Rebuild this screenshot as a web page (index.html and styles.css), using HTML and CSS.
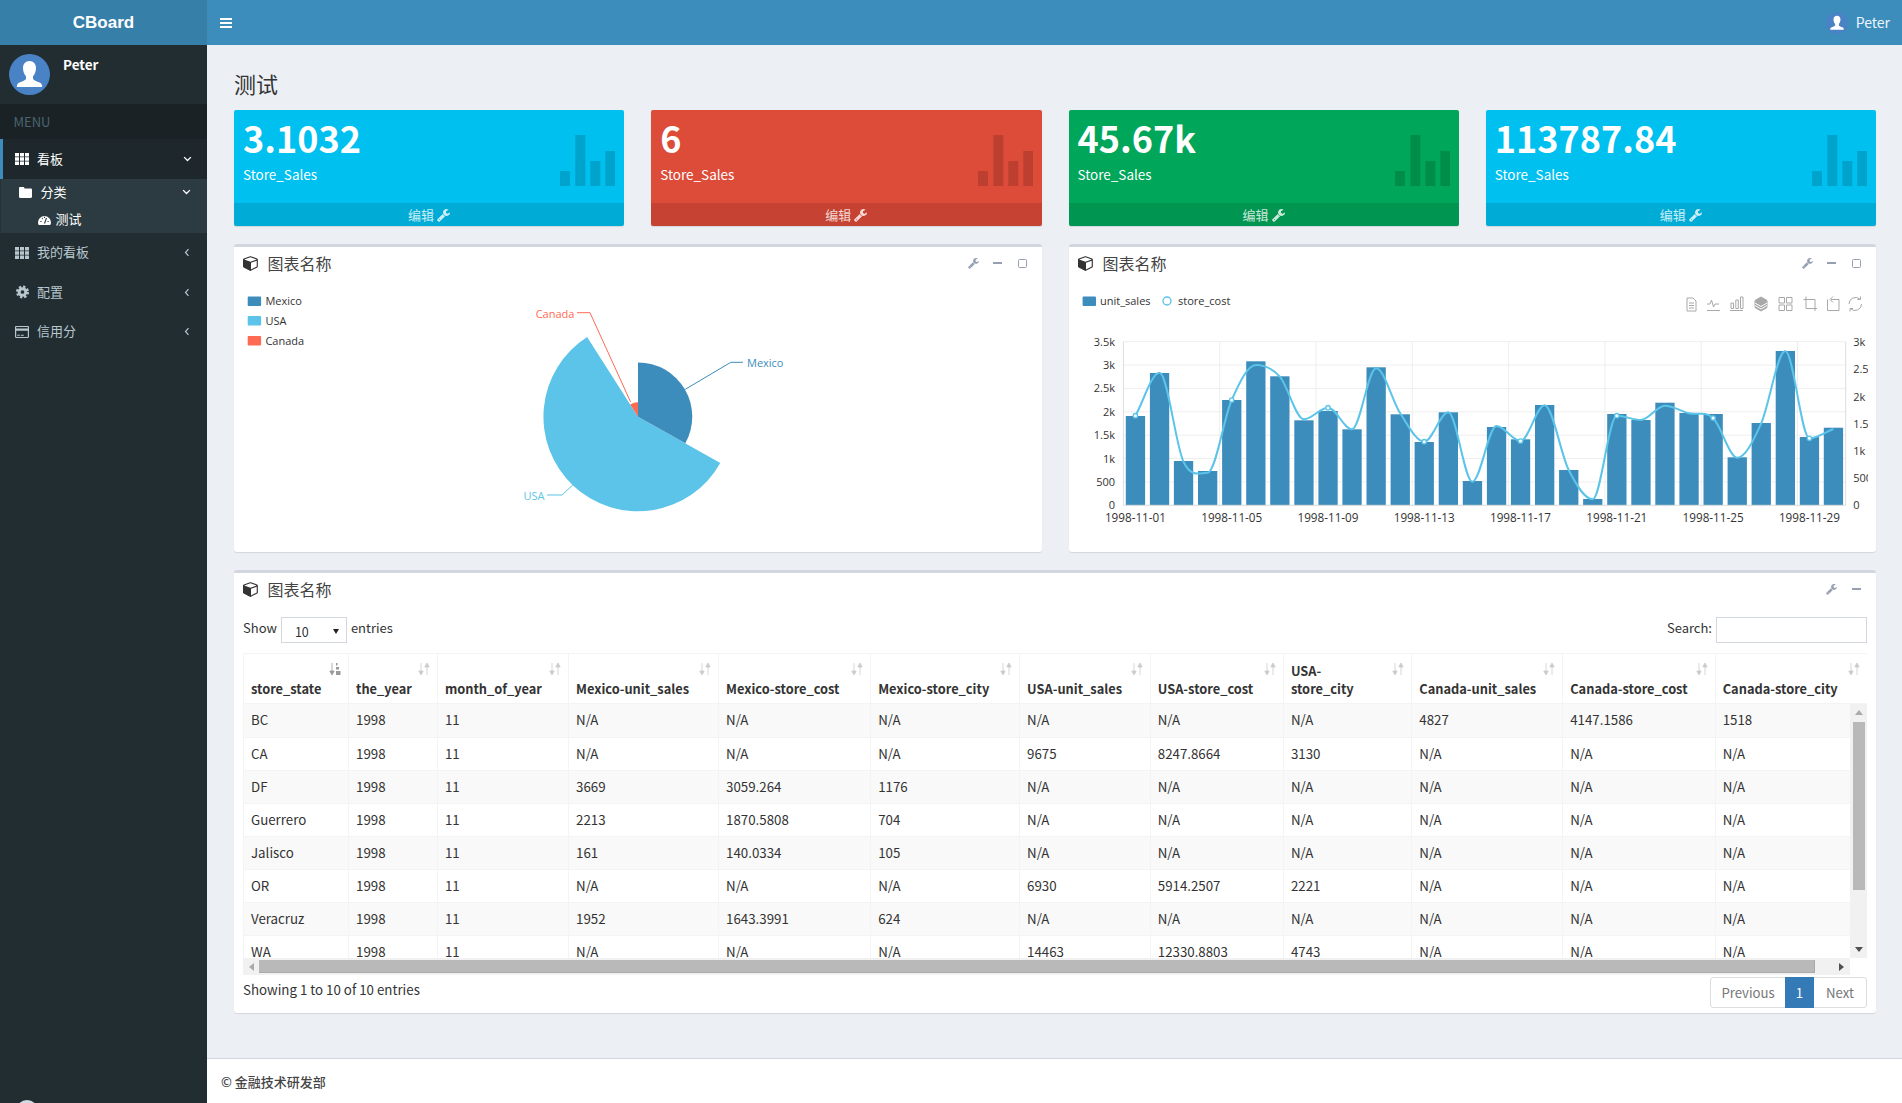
FILE: index.html
```html
<!DOCTYPE html>
<html lang="zh">
<head>
<meta charset="utf-8">
<title>CBoard</title>
<link rel="stylesheet" href="styles.css">
</head>
<body>
<svg class="defs" aria-hidden="true">
  <symbol id="i-wrench" viewBox="0 0 1664 1792"><path d="M384 1472q0-26-19-45t-45-19-45 19-19 45 19 45 45 19 45-19 19-45zm644-420l-682 682q-37 37-90 37-52 0-91-37l-106-108q-38-36-38-90 0-53 38-91l681-681q39 98 114.5 173.5t173.5 114.5zm634-435q0 39-23 106-47 134-164.5 217.5t-258.5 83.5q-185 0-316.5-131.5t-131.5-316.5 131.5-316.5 316.5-131.5q58 0 121.5 16.5t107.5 46.5q16 11 16 28t-16 28l-293 169v224l193 107q5-3 79-48.5t135.5-81 70.5-35.5q15 0 23.5 10t8.5 25z"/></symbol>
  <symbol id="i-cube" viewBox="0 0 1792 1792"><path d="M896 1629l640-349v-636l-640 233v752zm-64-865l698-254-698-254-698 254zm832-252v768q0 35-18 65t-49 47l-704 384q-28 16-61 16t-61-16l-704-384q-31-17-49-47t-18-65v-768q0-40 23-73t61-47l704-256q22-8 44-8t44 8l704 256q38 14 61 47t23 73z"/></symbol>
  <symbol id="i-th" viewBox="0 0 14 12"><path d="M0 0h4v3.4H0zM5 0h4v3.4H5zM10 0h4v3.4h-4zM0 4.3h4v3.4H0zM5 4.3h4v3.4H5zM10 4.3h4v3.4h-4zM0 8.6h4V12H0zM5 8.6h4V12H5zM10 8.6h4V12h-4z"/></symbol>
  <symbol id="i-left" viewBox="0 0 8 12"><path d="M6 1.5 2 6l4 4.5" fill="none" stroke="currentColor" stroke-width="1.6"/></symbol>
  <symbol id="i-down" viewBox="0 0 12 8"><path d="M1.5 1.5 6 6l4.500-4.500" fill="none" stroke="currentColor" stroke-width="1.8"/></symbol>
  <symbol id="i-sort" viewBox="0 0 12 14"><path d="M3 1v10M.8 9 3 13l2.200-4zM9 13V3M6.800 5 9 1l2.200 4z" fill="currentColor" stroke="currentColor" stroke-width=".8"/></symbol>
  <symbol id="i-user" viewBox="0 0 41 41"><circle cx="20.500" cy="20.500" r="20.500" class="avatar-bg"/><path d="M20.500 7c-4 0-6.500 3-6.500 7 0 3.500 1.300 6.500 3 8.300v2.700c-1 1.500-4 2.500-6.500 3.500-2.300.9-2.700 2.700-2.700 4.500h25.400c0-1.800-.4-3.600-2.700-4.500-2.500-1-5.500-2-6.500-3.500v-2.700c1.700-1.800 3-4.800 3-8.300 0-4-2.500-7-6.500-7z" class="avatar-fg"/></symbol>
</svg>

<div class="app">
  <aside class="sidebar">
    <div class="logo">CBoard</div>
    <div class="user-panel">
      <svg class="avatar"><use href="#i-user"/></svg>
      <span class="user-name">Peter</span>
    </div>
    <div class="menu-head">MENU</div>
    <a class="item active"><svg class="ico ico-th"><use href="#i-th"/></svg><span>看板</span><svg class="chev-d"><use href="#i-down"/></svg></a>
    <div class="subtree">
      <a class="sub sub-1">
        <svg class="ico-folder" viewBox="0 0 13 11"><path d="M0 1.200C0 .5.500 0 1.200 0h3c.7 0 1 .4 1.200 1l.2.500h6.200c.7 0 1.200.5 1.200 1.200v7.100c0 .7-.5 1.200-1.200 1.200H1.200C.5 11 0 10.500 0 9.800z"/></svg>
        <span>分类</span><svg class="chev-d chev-sub"><use href="#i-down"/></svg>
      </a>
      <a class="sub sub-2">
        <svg class="ico-gauge" viewBox="0 0 13 11"><path class="gauge-f" d="M0 8.500a6.500 6.500 0 0 1 13 0c0 1-.3 1.800-.7 2.500H.7C.3 10.300 0 9.500 0 8.500z"/><path class="gauge-m" d="M6.500 9.500 8.500 4M2.300 7.500h1.200M9.500 7.500h1.200M4 4.200l.7.800M6.500 2.800v1.200"/></svg>
        <span>测试</span>
      </a>
    </div>
    <a class="item"><svg class="ico ico-th"><use href="#i-th"/></svg><span>我的看板</span><svg class="chev-l"><use href="#i-left"/></svg></a>
    <a class="item">
      <svg class="ico ico-gear" viewBox="0 0 14 14"><circle cx="7" cy="7" r="3.600" class="gear-in"/><circle cx="7" cy="7" r="5.800" class="gear-out"/></svg>
      <span>配置</span><svg class="chev-l"><use href="#i-left"/></svg>
    </a>
    <a class="item">
      <svg class="ico ico-card" viewBox="0 0 14 12"><path d="M1.200 0h11.600C13.500 0 14 .5 14 1.200v9.600c0 .7-.5 1.200-1.200 1.200H1.200C.5 12 0 11.500 0 10.800V1.200C0 .5.500 0 1.200 0zM1.200 1.100v1.300h11.600V1.100zM1.200 4.700v6.200h11.600V4.700zM2.200 8.800h2.600v1H2.200zM5.800 8.800h3v1h-3z" fill-rule="evenodd"/></svg>
      <span>信用分</span><svg class="chev-l"><use href="#i-left"/></svg>
    </a>
    <div class="peek"></div>
  </aside>

  <div class="main">
    <header class="topbar">
      <svg class="burger" viewBox="0 0 12 10"><path d="M0 0h12v2H0zM0 4h12v2H0zM0 8h12v2H0z"/></svg>
      <div class="top-user">
        <svg class="top-avatar"><use href="#i-user"/></svg>
        <span>Peter</span>
      </div>
    </header>

    <main class="content">
      <h1 class="page-title">测试</h1>

      <section class="stats">
        <div class="stat stat-info">
          <div class="stat-inner"><h3>3.1032</h3><p>Store_Sales</p></div>
          <svg class="stat-bars" viewBox="0 0 55 51"><path d="M0 36h10v15H0zM15.300 0h10v51h-10zM30.300 26h10v25h-10zM45.300 16h10v35h-10z"/></svg>
          <a class="stat-foot">编辑 <svg class="foot-wrench"><use href="#i-wrench"/></svg></a>
        </div>
        <div class="stat stat-danger">
          <div class="stat-inner"><h3>6</h3><p>Store_Sales</p></div>
          <svg class="stat-bars" viewBox="0 0 55 51"><path d="M0 36h10v15H0zM15.300 0h10v51h-10zM30.300 26h10v25h-10zM45.300 16h10v35h-10z"/></svg>
          <a class="stat-foot">编辑 <svg class="foot-wrench"><use href="#i-wrench"/></svg></a>
        </div>
        <div class="stat stat-success">
          <div class="stat-inner"><h3>45.67k</h3><p>Store_Sales</p></div>
          <svg class="stat-bars" viewBox="0 0 55 51"><path d="M0 36h10v15H0zM15.300 0h10v51h-10zM30.300 26h10v25h-10zM45.300 16h10v35h-10z"/></svg>
          <a class="stat-foot">编辑 <svg class="foot-wrench"><use href="#i-wrench"/></svg></a>
        </div>
        <div class="stat stat-info">
          <div class="stat-inner"><h3>113787.84</h3><p>Store_Sales</p></div>
          <svg class="stat-bars" viewBox="0 0 55 51"><path d="M0 36h10v15H0zM15.300 0h10v51h-10zM30.300 26h10v25h-10zM45.300 16h10v35h-10z"/></svg>
          <a class="stat-foot">编辑 <svg class="foot-wrench"><use href="#i-wrench"/></svg></a>
        </div>
      </section>

      <section class="charts">
        <article class="box">
          <div class="box-head">
            <svg class="cube"><use href="#i-cube"/></svg><span class="box-title">图表名称</span>
            <div class="tools">
              <span class="tool"><svg class="t-wrench"><use href="#i-wrench"/></svg></span>
              <span class="tool"><i class="t-minus"></i></span>
              <span class="tool"><i class="t-square"></i></span>
            </div>
          </div>
          <svg class="chart chart-pie" viewBox="0 0 808 268">
            <rect class="s-blue" x="13.700" y="12.500" width="13.400" height="9.500" rx="1"/>
            <rect class="s-cyan" x="13.700" y="32" width="13.400" height="9.500" rx="1"/>
            <rect class="s-red" x="13.700" y="52" width="13.400" height="9.500" rx="1"/>
            <text class="lg" x="31.400" y="21">Mexico</text>
            <text class="lg" x="31.400" y="41">USA</text>
            <text class="lg" x="31.400" y="61">Canada</text>
            <path class="s-cyan" d="M404 132.700L486.300 179.100A94.500 94.500 0 1 1 353.100 53.100Z"/>
            <path class="s-blue" d="M404 132.700L404 78.400A54.300 54.300 0 0 1 451.300 159.300Z"/>
            <path class="s-red" d="M404 132.700L396.200 120.600A14.400 14.400 0 0 1 404 118.300Z"/>
            <path class="l-blue" d="M451.300 105.300L496.800 78.300H509"/>
            <path class="l-red" d="M396.600 118L356 28.700H343"/>
            <path class="l-cyan" d="M338.800 201L328 211H313"/>
            <text class="t-blue" x="513" y="83">Mexico</text>
            <text class="t-red" x="340.400" y="34" text-anchor="end">Canada</text>
            <text class="t-cyan" x="310.400" y="216" text-anchor="end">USA</text>
          </svg>
        </article>

        <article class="box">
          <div class="box-head">
            <svg class="cube"><use href="#i-cube"/></svg><span class="box-title">图表名称</span>
            <div class="tools">
              <span class="tool"><svg class="t-wrench"><use href="#i-wrench"/></svg></span>
              <span class="tool"><i class="t-minus"></i></span>
              <span class="tool"><i class="t-square"></i></span>
            </div>
          </div>
          <svg class="chart chart-line" viewBox="0 0 799 268">
            <path class="grid" d="M54.400 57.700H776.700M54.400 81.100H776.700M54.400 104.400H776.700M54.400 127.800H776.700M54.400 151.200H776.700M54.400 174.500H776.700M54.400 197.900H776.700M150.700 57.700V221.300M247 57.700V221.300M343.300 57.700V221.300M439.600 57.700V221.300M535.900 57.700V221.300M632.200 57.700V221.300M728.500 57.700V221.300"/>
            <g class="s-blue">
              <rect x="56.800" y="132" width="19.300" height="89.300"/><rect x="80.900" y="89" width="19.300" height="132.300"/><rect x="104.900" y="177" width="19.300" height="44.300"/><rect x="129" y="187" width="19.300" height="34.300"/><rect x="153.100" y="116" width="19.300" height="105.300"/><rect x="177.200" y="77.300" width="19.300" height="144"/><rect x="201.200" y="92.300" width="19.300" height="129"/><rect x="225.300" y="136.300" width="19.300" height="85"/><rect x="249.400" y="127" width="19.300" height="94.300"/><rect x="273.400" y="145.300" width="19.300" height="76"/><rect x="297.500" y="83.300" width="19.300" height="138"/><rect x="321.600" y="130.300" width="19.300" height="91"/><rect x="345.600" y="158" width="19.300" height="63.300"/><rect x="369.700" y="128.300" width="19.300" height="93"/><rect x="393.800" y="197" width="19.300" height="24.300"/><rect x="417.900" y="143" width="19.300" height="78.300"/><rect x="441.900" y="155.300" width="19.300" height="66"/><rect x="466" y="121" width="19.300" height="100.300"/><rect x="490.100" y="186" width="19.300" height="35.300"/><rect x="514.100" y="215" width="19.300" height="6.300"/><rect x="538.200" y="130" width="19.300" height="91.300"/><rect x="562.300" y="136" width="19.300" height="85.300"/><rect x="586.300" y="118.700" width="19.300" height="102.600"/><rect x="610.400" y="129" width="19.300" height="92.300"/><rect x="634.500" y="130" width="19.300" height="91.300"/><rect x="658.600" y="173.300" width="19.300" height="48"/><rect x="682.600" y="139" width="19.300" height="82.300"/><rect x="706.700" y="67" width="19.300" height="154.300"/><rect x="730.800" y="153" width="19.300" height="68.300"/><rect x="754.800" y="143.700" width="19.300" height="77.600"/>
            </g>
            <path class="axis" d="M54.400 57.700V221.300H776.700V57.700"/>
            <path class="line" d="M66.400 131.700C74.400 118 82.500 88.700 90.500 88.700S106.500 161 114.500 177.700S130.600 188.700 138.600 188.700S154.700 134 162.700 116S178.800 81 186.800 81S202.800 83.700 210.800 92.700S226.900 135.300 234.900 135.300S251 123.700 259 123.700S275 145.300 283 145.300S299.100 84.300 307.100 84.300S323.200 117.100 331.200 129.300S347.200 157.700 355.200 157.700S371.300 128.300 379.300 128.300S395.400 197.700 403.400 197.700S419.500 142 427.500 142S443.500 157 451.500 157S467.600 121.300 475.600 121.300S491.700 170.300 499.700 186S515.700 215.300 523.700 215.300S539.800 131.700 547.800 131.700S563.900 136 571.900 136S587.900 121.700 595.900 121.700S612 127.300 620 129.300S636.100 126.600 644.100 134S660.200 173.700 668.200 173.700S684.200 157.100 692.200 139.300S708.300 67 716.300 67S732.400 154.300 740.400 154.300S756.400 148 764.400 145"/>
            <g class="dot">
              <circle cx="66.400" cy="131.700" r="2.200"/><circle cx="162.700" cy="116" r="2.200"/><circle cx="259" cy="123.700" r="2.200"/><circle cx="355.200" cy="157.700" r="2.200"/><circle cx="451.500" cy="157" r="2.200"/><circle cx="547.800" cy="131.700" r="2.200"/><circle cx="644.100" cy="134" r="2.200"/><circle cx="740.400" cy="154.300" r="2.200"/>
            </g>
            <g class="ax-l" text-anchor="end">
              <text x="46" y="61.700">3.5k</text><text x="46" y="85.100">3k</text><text x="46" y="108.400">2.5k</text><text x="46" y="131.800">2k</text><text x="46" y="155.200">1.5k</text><text x="46" y="178.500">1k</text><text x="46" y="201.900">500</text><text x="46" y="225.300">0</text>
            </g>
            <g class="ax-l">
              <text x="784.200" y="61.700">3k</text><text x="784.200" y="89">2.5</text><text x="784.200" y="116.700">2k</text><text x="784.200" y="144">1.5</text><text x="784.200" y="171">1k</text><text x="784.200" y="198.300">500</text><text x="784.200" y="225.300">0</text>
            </g>
            <g class="ax-l ax-x" text-anchor="middle">
              <text x="66.400" y="238.300">1998-11-01</text><text x="162.700" y="238.300">1998-11-05</text><text x="259" y="238.300">1998-11-09</text><text x="355.200" y="238.300">1998-11-13</text><text x="451.500" y="238.300">1998-11-17</text><text x="547.800" y="238.300">1998-11-21</text><text x="644.100" y="238.300">1998-11-25</text><text x="740.400" y="238.300">1998-11-29</text>
            </g>
            <rect class="s-blue" x="13.600" y="12.500" width="13.400" height="9.500" rx="1"/>
            <text class="lg" x="31" y="21">unit_sales</text>
            <circle class="lg-dot" cx="98" cy="17" r="4"/>
            <text class="lg" x="109" y="21">store_cost</text>
            <g class="tb">
              <path d="M618 14h6l3 3v10h-9zM620 19h5M620 21.500h5M620 24h5"/>
              <path d="M638 26.500h13M638 20h3l1.500-4 2 7 1.500-3h4"/>
              <path d="M661 26.500h13M662 19h2.500v5.500H662zM666.800 16h2.500v8.500h-2.500zM671.500 13h2.500v11.500h-2.500z"/>
              <path class="tb-fill" d="M692 13l6 3.500v7L692 27l-6-3.500v-7z"/>
              <path class="tb-stripe" d="M686 19l6 3.500 6-3.500M686 21.500l6 3.500 6-3.500"/>
              <path d="M710 13.500h5.500v5.500H710zM717.500 13.500H723v5.500h-5.500zM710 21h5.500v5.500H710zM717.500 21H723v5.500h-5.500z"/>
              <path d="M737 12.500V24.500H748M734.500 15.500H746V27"/>
              <path d="M758.500 15.500V26.500H770V15.500H762M764 12.500l-3 3 3 3"/>
              <path d="M780 20a6.500 6.500 0 0 1 11-4.700M792.500 20a6.500 6.500 0 0 1-11 4.700M791.500 12.500v3h-3M781 27.500v-3h3"/>
            </g>
          </svg>
        </article>
      </section>

      <article class="box box-table">
        <div class="box-head">
          <svg class="cube"><use href="#i-cube"/></svg><span class="box-title">图表名称</span>
          <div class="tools">
            <span class="tool"><svg class="t-wrench"><use href="#i-wrench"/></svg></span>
            <span class="tool"><i class="t-minus"></i></span>
            <span class="tool tool-empty"></span>
          </div>
        </div>
        <div class="dt">
          <div class="dt-controls">
            <label class="dt-len">Show <span class="fake-select"><span>10</span><i class="caret"></i></span> entries</label>
            <label class="dt-search">Search: <span class="fake-input"></span></label>
          </div>
          <div class="dt-grid">
            <table class="dt-head">
              <colgroup><col class="c1"><col class="c2"><col class="c3"><col class="c4"><col class="c5"><col class="c6"><col class="c7"><col class="c8"><col class="c9"><col class="c10"><col class="c11"><col class="c12"></colgroup>
              <thead><tr>
                <th>store_state<svg class="sort sort-on" viewBox="0 0 12 14"><path d="M3 1v10M.8 9 3 13l2.200-4z" fill="currentColor" stroke="currentColor" stroke-width=".8"/><path d="M7 1h1.500v2.500H7zM7 5h3v2.500H7zM7 9h4.500v4H7z"/></svg></th>
                <th>the_year<svg class="sort"><use href="#i-sort"/></svg></th>
                <th>month_of_year<svg class="sort"><use href="#i-sort"/></svg></th>
                <th>Mexico-unit_sales<svg class="sort"><use href="#i-sort"/></svg></th>
                <th>Mexico-store_cost<svg class="sort"><use href="#i-sort"/></svg></th>
                <th>Mexico-store_city<svg class="sort"><use href="#i-sort"/></svg></th>
                <th>USA-unit_sales<svg class="sort"><use href="#i-sort"/></svg></th>
                <th>USA-store_cost<svg class="sort"><use href="#i-sort"/></svg></th>
                <th>USA-<br>store_city<svg class="sort"><use href="#i-sort"/></svg></th>
                <th>Canada-unit_sales<svg class="sort"><use href="#i-sort"/></svg></th>
                <th>Canada-store_cost<svg class="sort"><use href="#i-sort"/></svg></th>
                <th>Canada-store_city<svg class="sort"><use href="#i-sort"/></svg></th>
              </tr></thead>
            </table>
            <div class="dt-view">
              <table class="dt-body">
                <colgroup><col class="c1"><col class="c2"><col class="c3"><col class="c4"><col class="c5"><col class="c6"><col class="c7"><col class="c8"><col class="c9"><col class="c10"><col class="c11"><col class="c12b"></colgroup>
                <tbody>
                  <tr><td>BC</td><td>1998</td><td>11</td><td>N/A</td><td>N/A</td><td>N/A</td><td>N/A</td><td>N/A</td><td>N/A</td><td>4827</td><td>4147.1586</td><td>1518</td></tr>
                  <tr><td>CA</td><td>1998</td><td>11</td><td>N/A</td><td>N/A</td><td>N/A</td><td>9675</td><td>8247.8664</td><td>3130</td><td>N/A</td><td>N/A</td><td>N/A</td></tr>
                  <tr><td>DF</td><td>1998</td><td>11</td><td>3669</td><td>3059.264</td><td>1176</td><td>N/A</td><td>N/A</td><td>N/A</td><td>N/A</td><td>N/A</td><td>N/A</td></tr>
                  <tr><td>Guerrero</td><td>1998</td><td>11</td><td>2213</td><td>1870.5808</td><td>704</td><td>N/A</td><td>N/A</td><td>N/A</td><td>N/A</td><td>N/A</td><td>N/A</td></tr>
                  <tr><td>Jalisco</td><td>1998</td><td>11</td><td>161</td><td>140.0334</td><td>105</td><td>N/A</td><td>N/A</td><td>N/A</td><td>N/A</td><td>N/A</td><td>N/A</td></tr>
                  <tr><td>OR</td><td>1998</td><td>11</td><td>N/A</td><td>N/A</td><td>N/A</td><td>6930</td><td>5914.2507</td><td>2221</td><td>N/A</td><td>N/A</td><td>N/A</td></tr>
                  <tr><td>Veracruz</td><td>1998</td><td>11</td><td>1952</td><td>1643.3991</td><td>624</td><td>N/A</td><td>N/A</td><td>N/A</td><td>N/A</td><td>N/A</td><td>N/A</td></tr>
                  <tr><td>WA</td><td>1998</td><td>11</td><td>N/A</td><td>N/A</td><td>N/A</td><td>14463</td><td>12330.8803</td><td>4743</td><td>N/A</td><td>N/A</td><td>N/A</td></tr>
                </tbody>
              </table>
            </div>
            <div class="vbar"><i class="arr arr-up"></i><div class="vthumb"></div><i class="arr arr-down"></i></div>
            <div class="hbar"><i class="arr arr-left"></i><div class="hthumb"></div><i class="arr arr-right"></i></div>
          </div>
          <div class="dt-foot">
            <span class="dt-info">Showing 1 to 10 of 10 entries</span>
            <nav class="pager"><a>Previous</a><a class="on">1</a><a>Next</a></nav>
          </div>
        </div>
      </article>
    </main>

    <footer class="foot"><span>© 金融技术研发部</span></footer>
  </div>
</div>
</body>
</html>
```
FILE: styles.css
```css
* { box-sizing: border-box; }
html, body { margin: 0; height: 100%; }
body {
  font-family: "Noto Sans CJK SC", "Noto Sans", sans-serif;
  font-size: 14px;
  color: #333;
  background: #ecf0f5;
  overflow: hidden;
}
.defs { position: absolute; width: 0; height: 0; }
.avatar-bg { fill: #4a82c6; }
.avatar-fg { fill: #fff; }

.app { display: grid; grid-template-columns: 207px 1fr; height: 1103px; }

/* Sidebar */
.sidebar { position: relative; background: #222d32; color: #b8c7ce; overflow: hidden; }
.logo {
  height: 45px; background: #367fa9; color: #fff; text-align: center;
  font: bold 17px/45px "Liberation Sans", sans-serif;
}
.user-panel { height: 59px; display: flex; padding: 9px 0 0 9px; }
.avatar { width: 41px; height: 41px; }
.user-name { margin: 1px 0 0 13px; color: #fff; font-weight: 700; font-size: 13.500px; line-height: 18px; }
.menu-head { height: 35px; line-height: 35px; padding-left: 13.500px; background: #1a2226; color: #4b646f; font-size: 13px; }
.item { display: flex; align-items: center; height: 39.500px; padding-left: 15px; font-size: 13px; }
.item > span { margin-bottom: 2px; }
.item.active { height: 40px; background: #1e282c; color: #fff; border-left: 3px solid #3c8dbc; padding-left: 12px; }
.ico { width: 14px; flex: none; margin-right: 8px; fill: currentColor; }
.ico-th { height: 12px; }
.ico-gear { height: 14px; width: 13px; margin-left: .5px; margin-right: 8.500px; }
.ico-card { height: 12px; }
.gear-in { fill: none; stroke: currentColor; stroke-width: 3.200px; }
.gear-out { fill: none; stroke: currentColor; stroke-width: 2.400px; stroke-dasharray: 2.500 2.050; }
.chev-l { width: 6px; height: 9px; margin-left: auto; margin-right: 17px; }
.chev-d { width: 9px; height: 6px; margin-left: auto; margin-right: 15px; }
.chev-sub { margin-right: 16px; }
.subtree { height: 54px; background: #2c3b41; color: #fff; border-left: 1px solid #263238; font-size: 13px; }
.sub { display: flex; align-items: center; }
.sub > span { margin-bottom: 2px; }
.sub-1 { height: 26px; padding-left: 18px; }
.sub-2 { height: 28px; padding-left: 36.500px; }
.ico-folder { width: 13px; height: 11px; margin-right: 8.500px; fill: #fff; }
.ico-gauge { width: 13px; height: 11px; margin-right: 5px; }
.gauge-f { fill: #fff; }
.gauge-m { fill: none; stroke: #2c3b41; stroke-width: 1.100px; }
.peek { position: absolute; left: 16px; top: 1100px; width: 22px; height: 22px; border-radius: 50%; background: #cfdbe2; }

/* Main */
.main { display: flex; flex-direction: column; min-width: 0; }
.topbar { height: 45px; flex: none; display: flex; align-items: center; justify-content: space-between; background: #3c8dbc; padding: 0 12px 0 13px; color: #fff; }
.burger { width: 12px; height: 10px; fill: #fff; }
.top-user { display: flex; align-items: center; gap: 8px; font-size: 14px; color: #eef5fa; }
.top-user span { margin-bottom: 1px; }
.top-avatar { width: 22px; height: 22px; }

.content { flex: 1; padding: 0 26px 0 27px; }
.page-title { margin: 0; height: 65px; padding-top: 23px; font-size: 22px; line-height: 30px; font-weight: 400; color: #333; }

.stats { display: grid; grid-template-columns: repeat(4, 1fr); gap: 27px; }
.stat { position: relative; height: 116px; border-radius: 2px; color: #fff; box-shadow: 0 1px 1px rgba(0,0,0,.1); overflow: hidden; }
.stat-info { background: #00c0ef; }
.stat-danger { background: #dd4b39; }
.stat-success { background: #00a65a; }
.stat-inner { height: 93px; padding: 4px 9px; }
.stat h3 { margin: 0; font-size: 36px; line-height: 46px; font-weight: 700; white-space: nowrap; }
.stat p { margin: 4px 0 0; font-size: 13.500px; line-height: 20px; }
.stat-bars { position: absolute; right: 9px; top: 25px; width: 55px; height: 51px; fill: rgba(0,0,0,.15); }
.stat-foot { display: flex; justify-content: center; align-items: center; gap: 3px; height: 23px; background: rgba(0,0,0,.1); color: rgba(255,255,255,.8); font-size: 13px; }
.foot-wrench { width: 13px; height: 14px; fill: rgba(255,255,255,.8); }

.charts { display: grid; grid-template-columns: repeat(2, 1fr); gap: 27px; margin-top: 18px; }
.box { background: #fff; border-top: 3px solid #d2d6de; border-radius: 3px; box-shadow: 0 1px 1px rgba(0,0,0,.1); }
.charts .box { height: 308px; }
.box-head { display: flex; align-items: center; height: 37px; padding: 0 0 5px 9px; }
.box-title { font-size: 16px; color: #444; line-height: 20px; }
.cube { width: 16px; height: 16px; fill: #333; margin-right: 8.500px; }
.tools { margin-left: auto; display: flex; padding-right: 7.500px; }
.tool { width: 24.500px; height: 16px; display: flex; align-items: center; justify-content: center; }
.tool-empty { width: 0; }
.t-wrench { width: 11px; height: 12px; fill: #97a0b3; }
.t-minus { width: 9px; height: 2.500px; background: #97a0b3; }
.t-square { width: 9px; height: 9px; border: 1px solid #97a0b3; border-radius: 1.500px; }

.chart { display: block; height: 268px; }
.chart-pie { width: 808px; }
.chart-line { width: 799px; }
.chart text { font-family: "Open Sans", sans-serif; font-size: 11px; }
.chart .ax-x text { font-size: 11.700px; }
.lg { fill: #333; }
.s-blue { fill: #3c8dbc; }
.s-cyan { fill: #5bc4e8; }
.s-red { fill: #ff6a53; }
.l-blue, .l-red, .l-cyan { fill: none; stroke-width: 1px; }
.l-blue { stroke: #3c8dbc; }
.l-red { stroke: #ff6a53; }
.l-cyan { stroke: #5bc4e8; }
.t-blue { fill: #3c8dbc; }
.t-red { fill: #ff6a53; }
.t-cyan { fill: #5bc4e8; }
.grid { fill: none; stroke: #eee; stroke-width: 1px; }
.axis { fill: none; stroke: #ddd; stroke-width: 1px; }
.line { fill: none; stroke: #5bc4e8; stroke-width: 2px; }
.dot circle { fill: #fff; stroke: #5bc4e8; stroke-width: 1.300px; }
.ax-l { fill: #333; }
.lg-dot { fill: #fff; stroke: #5bc4e8; stroke-width: 1.400px; }
.tb path { fill: none; stroke: #a8a8a8; stroke-width: 1px; }
.tb .tb-fill { fill: #a8a8a8; }
.tb .tb-stripe { stroke: #fff; }

/* Table box */
.box-table { height: 443px; margin-top: 18px; }
.dt { padding: 7px 9px 0; }
.dt-controls { display: flex; justify-content: space-between; align-items: flex-start; height: 26px; margin-bottom: 10px; font-size: 13px; line-height: 22px; }
.dt-len, .dt-search { display: flex; align-items: flex-start; gap: 4px; }
.fake-select { position: relative; display: block; width: 66px; height: 26px; border: 1px solid #d2d6de; padding: 4px 0 0 13px; line-height: 20px; font-size: 12.500px; }
.caret { position: absolute; right: 7px; top: 11px; border: 3.500px solid transparent; border-top: 5px solid #222; border-bottom: 0; }
.fake-input { display: block; width: 151px; height: 26px; border: 1px solid #d2d6de; }

.dt-grid { display: grid; grid-template-columns: 1607px 17px; grid-template-rows: 51px 254px 17px; }
table { border-collapse: collapse; table-layout: fixed; }
.dt-head { grid-column: 1 / 3; width: 1624px; height: 51px; border-top: 1px solid #f4f4f4; }
.dt-body { width: 1607px; }
.c1 { width: 105px; } .c2 { width: 88.900px; } .c3 { width: 131.200px; } .c4 { width: 150px; }
.c5 { width: 152.100px; } .c6 { width: 148.900px; } .c7 { width: 130.700px; } .c8 { width: 133.200px; }
.c9 { width: 128.400px; } .c10 { width: 150.900px; } .c11 { width: 152.500px; } .c12 { width: 151.800px; } .c12b { width: 134.800px; }
th { position: relative; vertical-align: bottom; text-align: left; padding: 4px 20px 5px 7px; border-left: 1px solid #f4f4f4; border-bottom: 1px solid #f4f4f4; font-size: 12.800px; line-height: 18px; color: #333; white-space: nowrap; }
td { height: 33px; padding: 0 7px 1px; border: 1px solid #f4f4f4; border-top: 0; font-size: 13.300px; white-space: nowrap; color: #333; }
tr:nth-child(odd) td { background: #f9f9f9; }
.sort { position: absolute; right: 7px; top: 8px; width: 12px; height: 14px; color: #ccc; fill: currentColor; }
.sort-on { color: #999; }
.dt-view { overflow: hidden; }
.vbar { display: flex; flex-direction: column; align-items: center; background: #f1f1f1; }
.vthumb { width: 12px; height: 168px; margin-top: 7px; background: #b9b9b9; }
.hbar { display: flex; align-items: center; background: #f1f1f1; }
.hthumb { width: 1556px; height: 13px; background: #b9b9b9; border: 1px solid #a9a9a9; border-width: 0 1px 1px 0; }
.arr { display: block; flex: none; width: 0; height: 0; border: 4px solid transparent; }
.arr-up { margin-top: 6px; border-top: 0; border-bottom: 5px solid #aaa; }
.arr-down { margin-top: auto; margin-bottom: 6px; border-bottom: 0; border-top: 5px solid #505050; }
.arr-left { margin: 0 5px 0 6px; border-left: 0; border-right: 5px solid #aaa; }
.arr-right { margin-left: 24px; border-right: 0; border-left: 5px solid #505050; }

.dt-foot { display: flex; justify-content: space-between; align-items: flex-start; margin-top: 2px; }
.dt-info { margin-top: 3px; font-size: 13.300px; line-height: 20px; }
.pager { display: flex; height: 31px; border: 1px solid #ddd; border-radius: 3px; color: #777; font-size: 13.200px; line-height: 29px; }
.pager a { padding: 0 10px; }
.pager a:last-child { padding: 0 12px; }
.pager .on { background: #337ab7; color: #fff; margin: -1px 0; line-height: 31px; padding: 0 11px; }

.foot { flex: none; height: 45px; background: #fff; border-top: 1px solid #d2d6de; padding-left: 14px; display: flex; align-items: center; font-size: 13px; font-weight: 500; color: #444; }
```
